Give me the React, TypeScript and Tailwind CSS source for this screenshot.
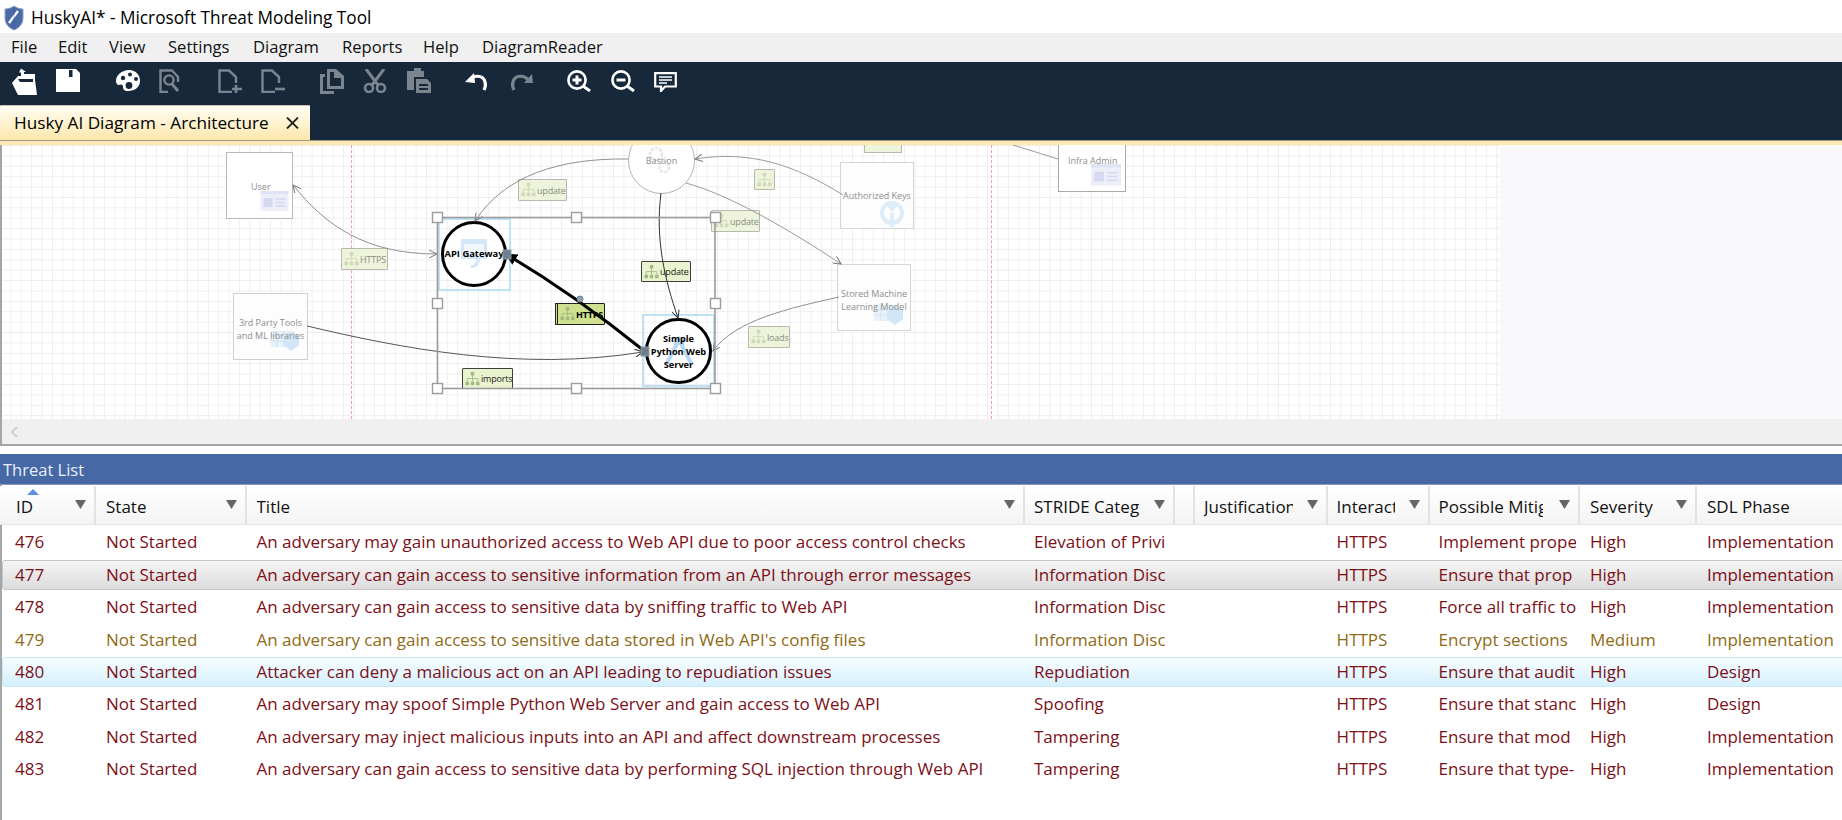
import React from "react";

const grey = "#7a858f";

function Shield() {
  return (
    <svg width="20" height="26" viewBox="0 0 20 26" className="ml-[4px]">
      <path d="M10 1 C7 3 4 4 1 4 V13 C1 19 5 23 10 25 C15 23 19 19 19 13 V4 C16 4 13 3 10 1Z" fill="#4a6aa8" stroke="#8fa3c8" strokeWidth="1" />
      <path d="M5 18 L14 6" stroke="#fff" strokeWidth="2.4" />
      <path d="M10 3 V24" stroke="#2c4478" strokeWidth="0.7" opacity="0.5" />
    </svg>
  );
}

function Toolbar() {
  return (
    <div className="flex items-start h-[43px] pt-[6px] bg-[#17283a]">
      <svg width="26" height="27" viewBox="0 0 26 27" className="ml-[11px]">
        <path fill="#fff" d="M1 15 L7 8 H10 V4.5 L8 4.5 L10 0.5 L15 4 H13 V6 H24 V12 L26 27 H7 Z" />
        <path fill="#17283a" d="M7 11 H22 V14 H9 Z" />
      </svg>
      <svg width="24" height="23" viewBox="0 0 24 23" className="ml-[19px] mt-[1px]">
        <path fill="#fff" d="M0 0 H20 L24 4 V23 H0 Z" />
        <rect x="13" y="1" width="3.5" height="7" fill="#17283a" />
      </svg>
      <svg width="24" height="22" viewBox="0 0 24 22" className="ml-[36px] mt-[2px]">
        <path fill="#fff" d="M13 0 C20 0 24 5 24 11 C24 17 19 21 12 21 C8 21 7 19 7 17 C7 14 5 14 3 15 C1 15 0 13 0 11 C0 5 6 0 13 0Z" />
        <circle cx="7" cy="8" r="2.2" fill="#17283a" />
        <circle cx="14" cy="4.5" r="2" fill="#17283a" />
        <circle cx="20" cy="9" r="2" fill="#17283a" />
        <circle cx="13" cy="15.5" r="3.4" fill="#17283a" />
      </svg>
      <svg width="21" height="24" viewBox="0 0 21 24" fill="none" stroke={grey} strokeWidth="2.4" className="ml-[19px] mt-[1px]">
        <path d="M9 23 H1.5 V1.5 H13 L19 8 V13" />
        <circle cx="10" cy="11" r="4.6" />
        <path d="M13 15 L19 22" strokeWidth="3" />
      </svg>
      <svg width="24" height="24" viewBox="0 0 24 24" fill="none" stroke={grey} strokeWidth="2.4" className="ml-[38px] mt-[1px]">
        <path d="M14 23 H1.5 V1.5 H11 L18 8 V14" />
        <path d="M18 16 V24 M14 20 H24" strokeWidth="2.6" />
      </svg>
      <svg width="24" height="24" viewBox="0 0 24 24" fill="none" stroke={grey} strokeWidth="2.4" className="ml-[19px] mt-[1px]">
        <path d="M14 23 H1.5 V1.5 H11 L18 8 V14" />
        <path d="M14 20 H24" strokeWidth="2.6" />
      </svg>
      <svg width="24" height="25" viewBox="0 0 24 25" fill={grey} className="ml-[35px] mt-[1px]">
        <path d="M7 0 H16 L24 7 V20 H7 Z M10 3 V17 H21 V9 H14 V3 Z" fillRule="evenodd" />
        <path d="M0 5 H5 V8 H3 V22 H14 V25 H0 Z" />
      </svg>
      <svg width="24" height="24" viewBox="0 0 24 24" fill="none" stroke={grey} strokeWidth="2.6" className="ml-[19px] mt-[1px]">
        <path d="M3 0 L15 16 M21 0 L9 16" strokeWidth="3" />
        <circle cx="6" cy="19" r="4" />
        <circle cx="18" cy="19" r="4" />
      </svg>
      <svg width="24" height="25" viewBox="0 0 24 25" fill={grey} className="ml-[20px]">
        <path d="M4 3 H7 V0 H14 V3 H17 V9 H7 V22 H0 V3 Z" />
        <path d="M9 11 H20 L24 15 V25 H9 Z M12 16 V18 H21 V16 Z M12 20 V22 H21 V20 Z" fillRule="evenodd" />
      </svg>
      <svg width="23" height="18" viewBox="0 0 23 18" fill="none" className="ml-[34px] mt-[5px]">
        <path d="M4 8 C8 2 18 1 20 9 C21 12 20 15 19 17" stroke="#fff" strokeWidth="3.2" />
        <path d="M0 9 L9 0 L10 10 Z" fill="#fff" />
      </svg>
      <svg width="23" height="18" viewBox="0 0 23 18" fill="none" className="ml-[22px] mt-[5px]">
        <path d="M19 8 C15 2 5 1 3 9 C2 12 3 15 4 17" stroke={grey} strokeWidth="3.2" />
        <path d="M23 10 L14 10 L22 1 Z" fill={grey} />
      </svg>
      <svg width="24" height="22" viewBox="0 0 24 22" fill="none" stroke="#fff" strokeWidth="2.6" className="ml-[34px] mt-[2px]">
        <circle cx="10" cy="10" r="8.6" />
        <path d="M16 16 L23 21" strokeWidth="3" />
        <path d="M5.5 10 H14.5 M10 5.5 V14.5" strokeWidth="3" />
      </svg>
      <svg width="24" height="22" viewBox="0 0 24 22" fill="none" stroke="#fff" strokeWidth="2.6" className="ml-[20px] mt-[2px]">
        <circle cx="10" cy="10" r="8.6" />
        <path d="M16 16 L23 21" strokeWidth="3" />
        <path d="M5.5 10 H14.5" strokeWidth="3" />
      </svg>
      <svg width="23" height="20" viewBox="0 0 23 20" fill="none" stroke="#fff" className="ml-[19px] mt-[4px]">
        <path d="M1.2 1.2 H21.8 V14.5 H11 L7 19 V14.5 H1.2 Z" strokeWidth="2.2" />
        <path d="M5 5 H18 M5 8 H18 M5 11 H13" strokeWidth="1.6" />
      </svg>
    </div>
  );
}

function FlowIcon({ dark }: { dark?: boolean }) {
  const c = dark ? "#a3b884" : "#cfdab8";
  return (
    <svg width="15" height="16" viewBox="0 0 17 17" className="shrink-0">
      <rect x="6.5" y="0.5" width="4" height="4" fill={c} />
      <path d="M8.5 4 V8 M2.5 11 V8 H14.5 V11 M8.5 8 V11" stroke={c} fill="none" />
      <rect x="0.5" y="11.5" width="4" height="4" fill={c} />
      <rect x="6.5" y="11.5" width="4" height="4" fill={c} />
      <rect x="12.5" y="11.5" width="4" height="4" fill={c} />
    </svg>
  );
}

function Label({ text, className, state }: { text: string; className: string; state: "faded" | "on" | "sel" }) {
  const skin =
    state === "faded"
      ? "bg-[#eef3dc] border-[#b6b9ab] text-[#8a8f80]"
      : state === "on"
      ? "bg-[#eaf3cf] border-[#3c4038] text-[#1b1b1b]"
      : "bg-[#cfe08f] border-[#1c1c1c] text-black font-bold";
  return (
    <div className={`absolute flex items-center gap-[1px] pl-[2px] border rounded-[1px] text-[9px] tracking-[-0.2px] leading-none whitespace-nowrap ${skin} ${className}`}>
      <FlowIcon dark={state !== "faded"} />
      {text && <span>{text}</span>}
    </div>
  );
}

function CardIcon({ className }: { className: string }) {
  return (
    <svg viewBox="0 0 28 20" className={`absolute ${className}`}>
      <rect width="28" height="20" fill="#eceef8" />
      <rect y="0" width="28" height="3" fill="#dfe2f2" />
      <rect x="3" y="7" width="9" height="9" fill="#d5d9ef" />
      <path d="M15 8 H25 M15 11.5 H25 M15 15 H25" stroke="#d5d9ef" strokeWidth="1.4" />
    </svg>
  );
}

function TableHexIcon({ className }: { className: string }) {
  return (
    <svg viewBox="0 0 30 26" className={`absolute ${className}`}>
      <path d="M0 4 H20 V20 H0 Z" fill="#e9f2fb" />
      <path d="M0 9 H20 M0 14 H20 M7 4 V20 M14 4 V20" stroke="#cfe2f5" strokeWidth="1" />
      <path d="M21 4 L29 9 V18 L21 24 L13 18 V9 Z" fill="#d3e6f8" />
    </svg>
  );
}

function Diagram() {
  return (
    <div className="flex-1 relative overflow-hidden bg-[#f9f9fb]">
      <div className="absolute left-[-2px] top-0 w-[1500px] h-[274px] font-['Open_Sans',sans-serif]">
        <div className="absolute inset-0 bg-white bg-[linear-gradient(#eeeef1_1px,transparent_1px),linear-gradient(90deg,#eeeef1_1px,transparent_1px)] bg-[size:10.4px_10.4px]" />
        {/* trust boundaries */}
        <div className="absolute left-[351px] top-0 h-[274px] border-l border-dashed border-[#f0a0a0]" />
        <div className="absolute left-[991px] top-0 h-[274px] border-l border-dashed border-[#f0a0a0]" />

        {/* external entities */}
        <div className="absolute left-[226px] top-[7px] w-[67px] h-[67px] bg-white border border-[#b9b9b9] text-[9px] text-[#8d8d8d]">
          <span className="absolute left-[24px] top-[27px]">User</span>
          <CardIcon className="left-[33px] top-[38px] w-[29px] h-[20px]" />
        </div>
        <div className="absolute left-[1058px] top-[-20px] w-[68px] h-[67px] bg-white border border-[#a9a9a9] text-[9px] text-[#8d8d8d]">
          <span className="absolute left-[9px] top-[28px] whitespace-nowrap">Infra Admin</span>
          <CardIcon className="left-[32px] top-[38px] w-[30px] h-[22px]" />
        </div>

        {/* data stores */}
        <div className="absolute left-[233px] top-[148px] w-[75px] h-[67px] bg-[#fdfdfe] border border-[#cfcfcf] text-[9px] leading-[13px] text-[#8d8d8d] text-center pt-[22px] whitespace-nowrap">
          <TableHexIcon className="left-[36px] top-[33px] w-[30px] h-[26px]" />
          <span className="relative">
            3rd Party Tools
            <br />
            and ML libraries
          </span>
        </div>
        <div className="absolute left-[840px] top-[17px] w-[74px] h-[67px] bg-[#fdfdfe] border border-[#d5d5d5] text-[9px] text-[#8d8d8d] text-center pt-[26px] whitespace-nowrap">
          <svg viewBox="0 0 26 28" className="absolute left-[38px] top-[36px] w-[26px] h-[28px]" fill="none" stroke="#dcecf9" strokeWidth="4">
            <circle cx="13" cy="14" r="10" />
            <path d="M13 14 V28 M8 3 L13 10 L18 3" />
          </svg>
          <span className="relative">Authorized Keys</span>
        </div>
        <div className="absolute left-[837px] top-[119px] w-[74px] h-[67px] bg-[#fdfdfe] border border-[#d5d5d5] text-[9px] leading-[13px] text-[#8d8d8d] text-center pt-[22px] whitespace-nowrap">
          <TableHexIcon className="left-[36px] top-[36px] w-[30px] h-[26px]" />
          <span className="relative">
            Stored Machine
            <br />
            Learning Model
          </span>
        </div>

        {/* top cut flow label */}
        <div className="absolute left-[864px] top-[-12px] w-[38px] h-[20px] bg-[#eef3dc] border border-[#b6b9ab]" />

        {/* processes */}
        <div className="absolute left-[628px] top-[-18px] w-[67px] h-[67px] rounded-full bg-white border border-[#b5b5b5] flex items-center justify-center text-[9px] text-[#8d8d8d]">
          <svg viewBox="0 0 24 30" className="absolute left-[18px] top-[16px] w-[24px] h-[32px]" fill="none" stroke="#e8e8e8" strokeWidth="3">
            <circle cx="9" cy="9" r="6" strokeDasharray="3 1.4" />
            <circle cx="17" cy="22" r="5" strokeDasharray="3 1.4" />
          </svg>
          <span className="relative">Bastion</span>
        </div>

        <div className="absolute left-[438px] top-[73px] w-[73px] h-[73px] border-2 border-[#bfe3f2]" />
        <div className="absolute left-[441px] top-[76px] w-[66px] h-[66px] rounded-full bg-white border-[3px] border-black flex items-center justify-center text-[9.4px] font-bold text-black whitespace-nowrap">
          <svg viewBox="0 0 26 29" className="absolute left-[17px] top-[15px] w-[26px] h-[29px]">
            <path d="M0 0 H26 V20 H19 C19 26 15 29 10 29 L10 26 C13 26 15 24 15 20 H0 Z" fill="#d3e7f8" />
            <rect x="3" y="5" width="20" height="12" fill="#f1f7fd" />
          </svg>
          <span className="relative">API Gateway</span>
        </div>

        <div className="absolute left-[642px] top-[169px] w-[73px] h-[73px] border-2 border-[#bfe3f2]" />
        <div className="absolute left-[645px] top-[173px] w-[67px] h-[66px] rounded-full bg-white border-[3px] border-black flex items-center justify-center text-[9.2px] leading-[13px] font-bold text-black text-center whitespace-nowrap">
          <svg viewBox="0 0 30 30" className="absolute left-[16px] top-[15px] w-[30px] h-[30px]" fill="none" stroke="#b9d8f3" strokeWidth="4">
            <path d="M2 29 L15 4 L28 29" />
            <path d="M10 6 H20" strokeWidth="6" />
          </svg>
          <span className="relative">
            Simple
            <br />
            Python Web
            <br />
            Server
          </span>
        </div>

        {/* data flow labels */}
        <Label text="update" state="faded" className="left-[518px] top-[34px] w-[49px] h-[22px]" />
        <Label text="HTTPS" state="faded" className="left-[341px] top-[103px] w-[47px] h-[22px]" />
        <Label text="" state="faded" className="left-[754px] top-[24px] w-[21px] h-[21px]" />
        <Label text="update" state="faded" className="left-[711px] top-[65px] w-[49px] h-[22px]" />
        <Label text="loads" state="faded" className="left-[748px] top-[181px] w-[42px] h-[22px]" />
        <Label text="update" state="on" className="left-[641px] top-[116px] w-[50px] h-[21px]" />
        <Label text="imports" state="on" className="left-[462px] top-[223px] w-[51px] h-[21px]" />
        <div className="absolute left-[555px] top-[158px] w-[48px] h-[22px] border border-[#222] bg-[#cfe08f]" />
        <Label text="HTTPS" state="sel" className="left-[557px] top-[158px] w-[48px] h-[22px]" />

        {/* connectors */}
        <svg viewBox="0 145 1500 275" className="absolute left-0 top-0 w-[1500px] h-[275px]" fill="none">
          <defs>
            <marker id="a" markerWidth="9" markerHeight="8" refX="8" refY="4" orient="auto" markerUnits="userSpaceOnUse">
              <path d="M0 0 L8 4 L0 8" fill="none" stroke="#777" strokeWidth="1" />
            </marker>
            <marker id="as" markerWidth="9" markerHeight="8" refX="8" refY="4" orient="auto-start-reverse" markerUnits="userSpaceOnUse">
              <path d="M0 0 L8 4 L0 8" fill="none" stroke="#777" strokeWidth="1" />
            </marker>
            <marker id="ad" markerWidth="9" markerHeight="8" refX="8" refY="4" orient="auto" markerUnits="userSpaceOnUse">
              <path d="M0 0 L8 4 L0 8" fill="none" stroke="#333" strokeWidth="1" />
            </marker>
            <marker id="t" markerWidth="14" markerHeight="12" refX="11" refY="6" orient="auto" markerUnits="userSpaceOnUse">
              <path d="M0 0 L12 6 L0 12 Z" fill="#000" />
            </marker>
          </defs>
          <path d="M437 254 C365 254 325 225 293 185" stroke="#8f8f8f" markerStart="url(#as)" markerEnd="url(#a)" />
          <path d="M628 159 C560 158 505 175 475 221" stroke="#8f8f8f" markerEnd="url(#a)" />
          <path d="M686 183 C730 195 790 230 841 264" stroke="#9a9a9a" markerEnd="url(#a)" />
          <path d="M843 195 C795 165 750 150 695 159" stroke="#9a9a9a" markerEnd="url(#a)" />
          <path d="M661 193 C655 240 665 280 678 318" stroke="#333" markerEnd="url(#ad)" />
          <path d="M307 326 C400 348 520 372 643 352" stroke="#555" markerEnd="url(#ad)" />
          <path d="M839 297 C790 308 735 320 713 351" stroke="#8f8f8f" markerEnd="url(#a)" />
          <path d="M1058 159 L1013 145" stroke="#9a9a9a" />
          <path d="M643 350 Q575 295 506 254" stroke="#000" strokeWidth="3" markerEnd="url(#t)" />
          <rect x="437.5" y="217.5" width="277.5" height="171" stroke="#9c9c9c" strokeWidth="1.6" />
          <g fill="#fff" stroke="#9c9c9c" strokeWidth="1.4">
            {[432, 571, 710].flatMap((x) =>
              [212, 298, 383].map((y) =>
                x === 571 && y === 298 ? null : <rect key={`${x}-${y}`} x={x + 0.5} y={y + 0.5} width="10" height="10" />
              )
            )}
          </g>
          <rect x="503" y="250" width="8" height="9" fill="#6d7f8d" stroke="#8a9aa6" />
          <rect x="641" y="347" width="8" height="9" fill="#6d7f8d" stroke="#8a9aa6" />
          <circle cx="580" cy="299" r="3" fill="#8fa3b3" stroke="#6d7f8d" />
        </svg>
      </div>
    </div>
  );
}

type Row = { id: string; title: string; cat: string; mit: string; sev: string; phase: string; kind?: "grey" | "blue" };

const rows: Row[] = [
  { id: "476", title: "An adversary may gain unauthorized access to Web API due to poor access control checks", cat: "Elevation of Privi", mit: "Implement prope", sev: "High", phase: "Implementation" },
  { id: "477", title: "An adversary can gain access to sensitive information from an API through error messages", cat: "Information Disc", mit: "Ensure that prop", sev: "High", phase: "Implementation", kind: "grey" },
  { id: "478", title: "An adversary can gain access to sensitive data by sniffing traffic to Web API", cat: "Information Disc", mit: "Force all traffic to", sev: "High", phase: "Implementation" },
  { id: "479", title: "An adversary can gain access to sensitive data stored in Web API's config files", cat: "Information Disc", mit: "Encrypt sections", sev: "Medium", phase: "Implementation" },
  { id: "480", title: "Attacker can deny a malicious act on an API leading to repudiation issues", cat: "Repudiation", mit: "Ensure that audit", sev: "High", phase: "Design", kind: "blue" },
  { id: "481", title: "An adversary may spoof Simple Python Web Server and gain access to Web API", cat: "Spoofing", mit: "Ensure that stanc", sev: "High", phase: "Design" },
  { id: "482", title: "An adversary may inject malicious inputs into an API and affect downstream processes", cat: "Tampering", mit: "Ensure that mod", sev: "High", phase: "Implementation" },
  { id: "483", title: "An adversary can gain access to sensitive data by performing SQL injection through Web API", cat: "Tampering", mit: "Ensure that type-", sev: "High", phase: "Implementation" },
];

const headGrid = "grid grid-cols-[96px_150.5px_778.5px_149.5px_20.5px_132.6px_102px_150.4px_117px_145.4px]";
const rowGrid = "grid grid-cols-[93px_150.5px_778.5px_149.5px_20.5px_132.6px_102px_150.4px_117px_150px]";

const headers = [
  { t: "ID", lab: "", pl: "pl-[16px]", arrow: true },
  { t: "State", lab: "", pl: "pl-[10px]", arrow: true },
  { t: "Title", lab: "", pl: "pl-[10px]", arrow: true },
  { t: "STRIDE Categ", lab: "w-[106px]", pl: "pl-[9px]", arrow: true },
  { t: "", lab: "", pl: "", arrow: false },
  { t: "Justification", lab: "w-[89px]", pl: "pl-[9px]", arrow: true },
  { t: "Interact", lab: "w-[58px]", pl: "pl-[9px]", arrow: true },
  { t: "Possible Mitig", lab: "w-[104px]", pl: "pl-[9px]", arrow: true },
  { t: "Severity", lab: "", pl: "pl-[10px]", arrow: true },
  { t: "SDL Phase", lab: "", pl: "pl-[10px]", arrow: false },
];

function ThreatRow({ r }: { r: Row }) {
  const color = r.sev === "Medium" ? "text-[#8f6a14]" : "text-[#7d0f17]";
  const skin =
    r.kind === "grey"
      ? "border border-[#c4c4c4] bg-[linear-gradient(#f5f5f5,#dcdcdc)]"
      : r.kind === "blue"
      ? "border border-[#c8e9f7] bg-[linear-gradient(#f7fdff,#d5f0fd)]"
      : "border border-transparent";
  const cell = "overflow-hidden whitespace-nowrap";
  return (
    <div className="h-[32.4px] flex items-center">
      <div className={`${rowGrid} ${color} ${skin} h-[30px] w-[1850px] items-center rounded-l-[3px]`}>
        <div className={`pl-[12px] ${cell}`}>{r.id}</div>
        <div className={`pl-[10px] ${cell}`}>Not Started</div>
        <div className={`pl-[10px] ${cell}`}>{r.title}</div>
        <div className="pl-[9px] pr-[10px]">
          <div className={cell}>{r.cat}</div>
        </div>
        <div />
        <div />
        <div className={`pl-[9px] ${cell}`}>HTTPS</div>
        <div className="pl-[9px] pr-[4px]">
          <div className={cell}>{r.mit}</div>
        </div>
        <div className={`pl-[10px] ${cell}`}>{r.sev}</div>
        <div className={`pl-[10px] ${cell}`}>{r.phase}</div>
      </div>
    </div>
  );
}

export default function App() {
  return (
    <div className="w-[1842px] h-[820px] overflow-hidden bg-white flex flex-col font-['Open_Sans',sans-serif] text-black">
      <div className="h-[33px] shrink-0 flex items-center gap-[7px] bg-white pt-[2px] text-[17.25px]">
        <Shield />
        <span>HuskyAI* - Microsoft Threat Modeling Tool</span>
      </div>
      <div className="h-[29px] shrink-0 bg-[#f0f0f0] flex items-center pl-[11px] text-[16.6px] text-[#111]">
        <span className="w-[47px]">File</span>
        <span className="w-[51px]">Edit</span>
        <span className="w-[59px]">View</span>
        <span className="w-[85px]">Settings</span>
        <span className="w-[89px]">Diagram</span>
        <span className="w-[81px]">Reports</span>
        <span className="w-[59px]">Help</span>
        <span>DiagramReader</span>
      </div>
      <Toolbar />
      <div className="h-[35px] shrink-0 bg-[#17283a] flex items-end">
        <div className="w-[310px] h-[35px] border-t border-[#c9c4b0] bg-[linear-gradient(#fffdf3,#fde7ad)] flex items-center justify-between pl-[14px] pr-[11px] text-[17.2px] rounded-tl-[1px]">
          <span>Husky AI Diagram - Architecture</span>
          <svg width="13" height="12" viewBox="0 0 13 12" stroke="#222" strokeWidth="1.8">
            <path d="M1 0.5 L12 11.5 M12 0.5 L1 11.5" />
          </svg>
        </div>
      </div>
      <div className="h-[1px] shrink-0 bg-[#9a9a8c]" />
      <div className="h-[4px] shrink-0 bg-[#fde9b4]" />
      <div className="h-[301px] shrink-0 flex flex-col border-l-2 border-b-2 border-[#a6a6a6]">
        <Diagram />
        <div className="h-[25px] shrink-0 bg-[#f0f0f0] flex items-center pl-[9px]">
          <svg width="7" height="12" viewBox="0 0 7 12" fill="none" stroke="#c8c8c8" strokeWidth="1.6">
            <path d="M6 1 L1 6 L6 11" />
          </svg>
        </div>
      </div>
      <div className="h-[8px] shrink-0 bg-white" />
      <div className="h-[31px] shrink-0 bg-[#4668a5] flex items-center pl-[3px] pt-[3px] text-[16.5px] text-[#e8eefa] border-b border-[#8d99b0]">
        Threat List
      </div>
      <div className="flex-1 flex flex-col border-l-2 border-[#a6a6a6] text-[17px] pt-[1px]">
        <div className={`${headGrid} h-[39px] shrink-0 ml-[-2px] bg-[linear-gradient(#ffffff,#f4f4f4)] border-b border-[#e4e4e4]`}>
          {headers.map((h, i) => (
            <div key={i} className={`relative flex items-center pt-[4px] border-r-2 border-[#e2e2e2] text-[#111] last:border-r-0 ${h.pl}`}>
              <span className={`overflow-hidden whitespace-nowrap ${h.lab}`}>{h.t}</span>
              {i === 0 && (
                <svg width="12" height="6" viewBox="0 0 12 6" className="absolute left-[27px] top-[3px]">
                  <path d="M0 6 L6 0 L12 6 Z" fill="#5b8fe0" />
                </svg>
              )}
              {h.arrow && (
                <svg width="11" height="9" viewBox="0 0 11 9" className="absolute right-[8px] top-[14px]">
                  <path d="M0 0 H11 L5.5 9 Z" fill="#666" />
                </svg>
              )}
            </div>
          ))}
        </div>
        <div className="flex flex-col pt-[1px]">
          {rows.map((r) => (
            <ThreatRow key={r.id} r={r} />
          ))}
        </div>
      </div>
    </div>
  );
}
